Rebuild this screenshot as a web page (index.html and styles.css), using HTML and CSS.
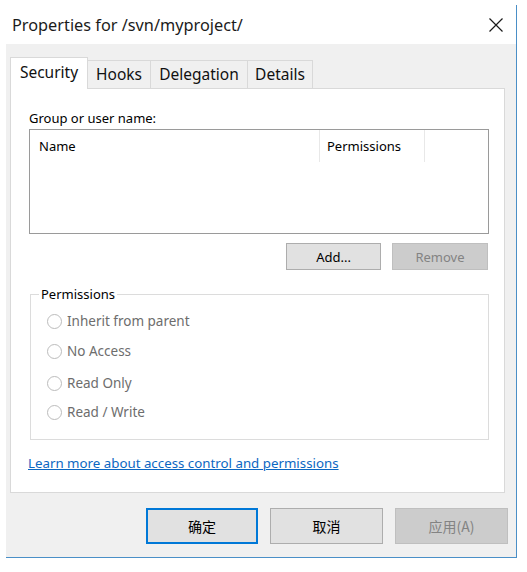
FILE: index.html
```html
<!DOCTYPE html>
<html>
<head>
<meta charset="utf-8">
<link rel="stylesheet" href="styles.css">
</head>
<body>
<div class="window">
  <div class="titlebar">
    <span class="title">Properties for /svn/myproject/</span>
    <svg class="close" width="14" height="14" viewBox="0 0 14 14"><path d="M0.5 0.5 L13.5 13.5 M13.5 0.5 L0.5 13.5" stroke="#1a1a1a" stroke-width="1.2" fill="none"/></svg>
  </div>
  <div class="client">
    <div class="tabs">
      <div class="tab active t-sec">Security</div>
      <div class="tab t-hooks">Hooks</div>
      <div class="tab t-del">Delegation</div>
      <div class="tab t-det">Details</div>
    </div>
    <div class="panel">
      <div class="label">Group or user name:</div>
      <div class="listbox">
        <div class="listhead">
          <div class="col col-name">Name</div>
          <div class="col col-perm">Permissions</div>
        </div>
      </div>
      <div class="btnrow">
        <button class="btn">Add...</button>
        <button class="btn disabled">Remove</button>
      </div>
      <div class="groupbox">
        <div class="legend">Permissions</div>
        <div class="radio r1"><span class="circle"></span><span>Inherit from parent</span></div>
        <div class="radio r2"><span class="circle"></span><span>No Access</span></div>
        <div class="radio r3"><span class="circle"></span><span>Read Only</span></div>
        <div class="radio r4"><span class="circle"></span><span>Read / Write</span></div>
      </div>
      <a class="link" href="#">Learn more about access control and permissions</a>
    </div>
    <div class="footer">
      <button class="fbtn default">确定</button>
      <button class="fbtn">取消</button>
      <button class="fbtn disabled">应用(A)</button>
    </div>
  </div>
</div>
</body>
</html>
```

FILE: styles.css
```css
* { box-sizing: border-box; }
html, body { margin: 0; padding: 0; background: #ffffff; }
body {
  font-family: "Noto Sans", "Noto Sans CJK SC", sans-serif;
  font-size: 14px;
  color: #000;
}
.window {
  margin-left: 6px;
  margin-top: 5px;
  width: 511px;
  border-right: 1px solid #4a8fc7;
  border-bottom: 1px solid #4a8fc7;
}
.titlebar {
  height: 39px;
  display: flex;
  align-items: center;
  justify-content: space-between;
  padding: 0 13px 0 6px;
  background: #fff;
}
.title { font-size: 16.3px; color: #1b1b1b; }
.close { margin-top: 1px; }
.client {
  background: #f0f0f0;
  padding: 13px 8px 13px 4px;
}
.tabs {
  display: flex;
  align-items: flex-end;
  height: 31px;
}
.tab {
  height: 28px;
  border: 1px solid #d9d9d9;
  border-bottom: none;
  border-left: none;
  font-size: 15.5px;
  line-height: 27px;
  text-align: center;
  color: #111;
  background: #f0f0f0;
}
.t-hooks { width: 63px; }
.t-del { width: 97px; }
.t-det { width: 65px; }
.tab.active {
  width: 78px;
  height: 32px;
  margin-bottom: -1px;
  border-left: 1px solid #d9d9d9;
  background: #fff;
  line-height: 28px;
  position: relative;
  z-index: 1;
}
.panel {
  background: #fff;
  border: 1px solid #d9d9d9;
  width: 495px;
  height: 405px;
  padding: 20px 15px 0 18px;
}
.label { font-size: 13px; line-height: 18px; }
.listbox {
  margin-top: 2px;
  width: 460px;
  height: 105px;
  border: 1px solid #9a9a9a;
}
.listhead { display: flex; height: 32px; }
.col {
  font-size: 13px;
  line-height: 32px;
  border-right: 1px solid #e8e8e8;
}
.col-name { width: 290px; padding-left: 9px; }
.col-perm { width: 105px; padding-left: 7px; }
.btnrow {
  display: flex;
  justify-content: flex-end;
  gap: 11px;
  width: 459px;
  margin-top: 9px;
}
.btn {
  height: 27px;
  width: 95px;
  font-family: inherit;
  font-size: 13px;
  background: #e1e1e1;
  border: 1px solid #adadad;
  color: #000;
  padding: 0;
}
.btn.disabled {
  width: 96px;
  background: #cccccc;
  border-color: #bfbfbf;
  color: #838383;
}
.groupbox {
  position: relative;
  margin-top: 24px;
  width: 459px;
  height: 146px;
  margin-left: 1px;
  border: 1px solid #dcdcdc;
  padding: 16px 0 0 16px;
}
.legend {
  position: absolute;
  top: -10px;
  left: 8px;
  padding: 0 2px;
  background: #fff;
  font-size: 13px;
  line-height: 18px;
}
.radio {
  display: flex;
  align-items: center;
  gap: 5px;
  height: 20px;
  font-size: 13.5px;
  color: #6d6d6d;
}
.r2 { margin-top: 10px; }
.r3 { margin-top: 12px; }
.r4 { margin-top: 9px; }
.circle {
  width: 15px;
  height: 15px;
  border: 1px solid #bcbcbc;
  border-radius: 50%;
  background: #fff;
}
.link {
  display: inline-block;
  margin-top: 14px;
  margin-left: -1px;
  font-size: 13.3px;
  color: #0b67c2;
  text-decoration: underline;
  line-height: 18px;
}
.footer {
  display: flex;
  justify-content: flex-end;
  gap: 12px;
  margin-top: 15px;
}
.fbtn {
  width: 113px;
  height: 36px;
  font-family: "Noto Sans CJK SC", "Noto Sans", sans-serif;
  font-size: 14px;
  background: #e1e1e1;
  border: 1px solid #adadad;
  color: #000;
  padding: 0;
}
.fbtn.default {
  width: 112px;
  border: 2px solid #0078d7;
}
.fbtn.disabled {
  background: #cccccc;
  border-color: #bfbfbf;
  color: #838383;
}
```
